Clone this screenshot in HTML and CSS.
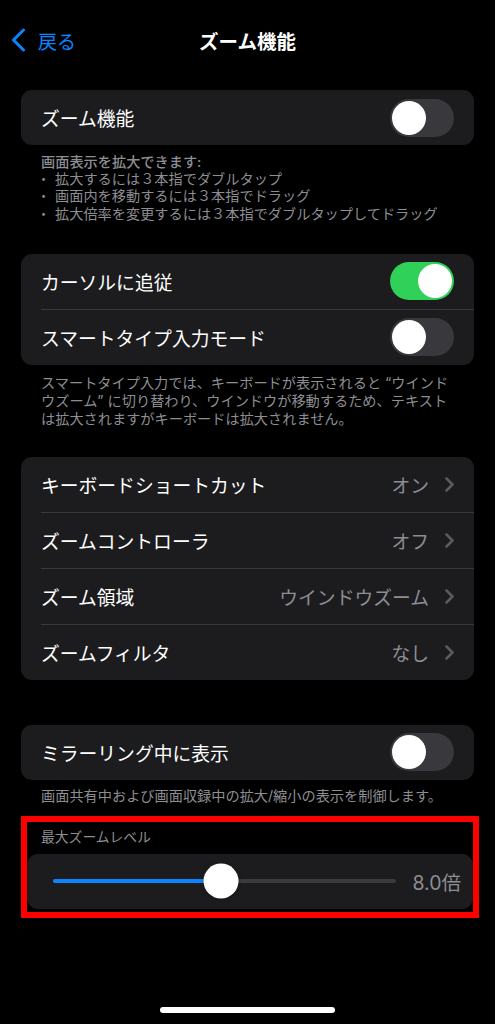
FILE: index.html
```html
<!DOCTYPE html>
<html lang="ja">
<head>
    <meta charset="UTF-8">
    <title>ズーム機能</title>
    <link rel="stylesheet" href="styles.css">
</head>
<body>
    <div class="screen">
        <header class="nav">
            <a class="back">
                <svg width="15" height="24" viewBox="0 0 15 24">
                    <path d="M12.5 2 L2.5 12 L12.5 22" fill="none" stroke="#0a84ff" stroke-width="3" stroke-linecap="round" stroke-linejoin="round"/>
                </svg>
                <span>戻る</span>
            </a>
            <h1 class="title">ズーム機能</h1>
            <span></span>
        </header>

        <main class="content">
            <div class="card">
                <div class="row">
                    <span class="label">ズーム機能</span>
                    <span class="switch"></span>
                </div>
            </div>
            <div class="note note-list">
                <p class="note-head">画面表示を拡大できます:</p>
                <ul>
                    <li><span class="dot">•</span>拡大するには３本指でダブルタップ</li>
                    <li><span class="dot">•</span>画面内を移動するには３本指でドラッグ</li>
                    <li><span class="dot">•</span>拡大倍率を変更するには３本指でダブルタップしてドラッグ</li>
                </ul>
            </div>

            <div class="card card-2">
                <div class="row">
                    <span class="label">カーソルに追従</span>
                    <span class="switch on"></span>
                </div>
                <div class="row">
                    <span class="label">スマートタイプ入力モード</span>
                    <span class="switch"></span>
                </div>
            </div>
            <p class="note note-text">スマートタイプ入力では、キーボードが表示されると “ウインド<br>ウズーム” に切り替わり、ウインドウが移動するため、テキスト<br>は拡大されますがキーボードは拡大されません。</p>

            <div class="card card-3">
                <div class="row">
                    <span class="label">キーボードショートカット</span>
                    <span class="value">オン<svg class="chev" width="9" height="15" viewBox="0 0 9 15"><path d="M1.5 1.5 L7.5 7.5 L1.5 13.5"/></svg></span>
                </div>
                <div class="row">
                    <span class="label">ズームコントローラ</span>
                    <span class="value">オフ<svg class="chev" width="9" height="15" viewBox="0 0 9 15"><path d="M1.5 1.5 L7.5 7.5 L1.5 13.5"/></svg></span>
                </div>
                <div class="row">
                    <span class="label">ズーム領域</span>
                    <span class="value">ウインドウズーム<svg class="chev" width="9" height="15" viewBox="0 0 9 15"><path d="M1.5 1.5 L7.5 7.5 L1.5 13.5"/></svg></span>
                </div>
                <div class="row">
                    <span class="label">ズームフィルタ</span>
                    <span class="value">なし<svg class="chev" width="9" height="15" viewBox="0 0 9 15"><path d="M1.5 1.5 L7.5 7.5 L1.5 13.5"/></svg></span>
                </div>
            </div>

            <div class="card card-4">
                <div class="row">
                    <span class="label">ミラーリング中に表示</span>
                    <span class="switch"></span>
                </div>
            </div>
            <p class="note note-short">画面共有中および画面収録中の拡大/縮小の表示を制御します。</p>

            <section class="highlight">
                <h2 class="section-head">最大ズームレベル</h2>
                <div class="card slider-card">
                    <div class="track">
                        <div class="fill" style="width: 49%;"></div>
                        <div class="thumb" style="left: 49%;"></div>
                    </div>
                    <span class="zoom-value">8.0倍</span>
                </div>
            </section>
        </main>

        <div class="home-bar"></div>
    </div>
</body>
</html>
```

FILE: styles.css
```css
body {
    margin: 0;
    background: #000;
    color: #fff;
    font-family: Inter, "Noto Sans CJK JP", sans-serif;
}

.screen {
    display: flex;
    flex-direction: column;
    width: 495px;
    height: 1024px;
    overflow: hidden;
}

/* nav bar */
.nav {
    display: grid;
    grid-template-columns: 1fr auto 1fr;
    align-items: center;
    height: 80px;
    padding: 0 11px;
}

.back {
    display: flex;
    align-items: center;
    gap: 12px;
    color: #0a84ff;
    font-size: 19px;
}

.title {
    margin: 0;
    font-size: 19.5px;
    font-weight: 700;
}

.content {
    padding: 10px 21px 0;
}

/* cards and rows */
.card {
    background: #1c1c1e;
    border-radius: 11px;
}

.row {
    display: flex;
    align-items: center;
    justify-content: space-between;
    height: 55px;
    padding: 0 20px;
}

.row + .row {
    border-top: 1px solid #38383a;
    margin-left: 20px;
    padding-left: 0;
}

.label {
    font-size: 18.8px;
}

.switch {
    position: relative;
    width: 64px;
    height: 38px;
    border-radius: 19px;
    background: #39393d;
}

.switch::after {
    content: "";
    position: absolute;
    top: 2px;
    left: 2px;
    width: 34px;
    height: 34px;
    border-radius: 50%;
    background: #fff;
}

.switch.on {
    background: #30d158;
}

.switch.on::after {
    left: 28px;
}

.value {
    display: flex;
    align-items: center;
    gap: 16px;
    color: #8d8d93;
    font-size: 18.8px;
}

.chev {
    fill: none;
    stroke: #5b5b5f;
    stroke-width: 2.5;
    stroke-linecap: round;
    stroke-linejoin: round;
}

/* footers */
.note {
    margin: 0;
    padding-left: 20px;
    color: #8d8d93;
    font-size: 14.2px;
}

.note-list {
    padding-top: 8px;
    line-height: 17.2px;
}

.note-list p {
    margin: 0;
}

.note-head {
    font-weight: 500;
}

.note-list ul {
    margin: 0;
    padding: 0;
    list-style: none;
}

.dot {
    display: inline-block;
    width: 14px;
    font-size: 9px;
    vertical-align: 2px;
}

.card-2 {
    margin-top: 32px;
}

.note-text {
    padding-top: 9px;
    line-height: 18.3px;
}

.card-3 {
    margin-top: 28px;
}

.card-4 {
    margin-top: 45px;
}

.note-short {
    padding-top: 7px;
    line-height: 18px;
}

/* max zoom level, boxed in red */
.highlight {
    margin: 11px -5px 0 0;
    border: 6px solid #ff0000;
    padding-bottom: 3px;
}

.section-head {
    margin: 0;
    height: 32px;
    line-height: 30px;
    padding-left: 14px;
    color: #8d8d93;
    font-size: 13.8px;
    font-weight: 400;
}

.slider-card {
    display: flex;
    align-items: center;
    gap: 16px;
    height: 55px;
    padding: 0 12px 0 26px;
}

.track {
    position: relative;
    flex: 1;
    height: 4px;
    border-radius: 2px;
    background: #3a3a3c;
}

.fill {
    height: 100%;
    border-radius: 2px;
    background: #0a84ff;
}

.thumb {
    position: absolute;
    top: 50%;
    width: 35px;
    height: 35px;
    border-radius: 50%;
    background: #fff;
    transform: translate(-50%, -50%);
    box-shadow: 0 1px 4px rgba(0,0,0,0.3);
}

.zoom-value {
    color: #8d8d93;
    font-size: 19.5px;
}

.home-bar {
    width: 175px;
    height: 6px;
    margin: auto auto 11px;
    border-radius: 3px;
    background: #fff;
}
```
